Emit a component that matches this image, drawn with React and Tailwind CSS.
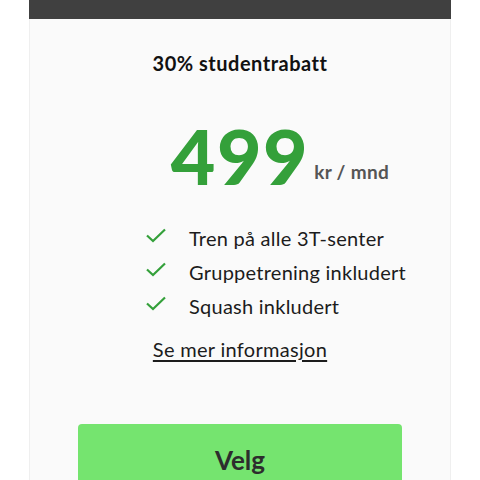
export default function App() {
  const items = ["Tren på alle 3T-senter", "Gruppetrening inkludert", "Squash inkludert"];
  return (
    <div className="w-[480px] h-[480px] overflow-hidden bg-white" style={{ fontFamily: "Lato, 'Noto Sans', sans-serif" }}>
      <div className="mx-[29px] w-[422px] h-[480px] flex flex-col border-x border-[#efefef] bg-[#fafafa]">
        <div className="h-[19px] shrink-0 bg-[#404040] -mx-px"></div>
        <div className="shrink-0 flex flex-col items-center">
          <div className="mt-[32px] text-[20px] font-bold text-[#111] leading-[24px] tracking-[0.5px]">30% studentrabatt</div>
          <div className="mt-[35px] relative flex items-baseline">
            <span className="text-[77px] font-black text-[#34a03a] leading-[90px] tracking-[1.5px]">499</span>
            <span className="absolute left-full bottom-[14px] ml-[5px] text-[19px] font-bold text-[#555] tracking-[0.3px] whitespace-nowrap">kr / mnd</span>
          </div>
          <div className="self-start ml-[115px] mt-[26px] flex flex-col gap-[10px]">
            {items.map((t) => (
              <div key={t} className="flex items-center h-[24px]">
                <svg width="22" height="16" viewBox="0 0 22 16" className="mr-[22px] -mt-[6px]">
                  <path d="M2 8.5 L8 14 L20 2.5" fill="none" stroke="#34a03a" strokeWidth="2.2" />
                </svg>
                <span className="text-[20px] text-[#1c1c1c] tracking-[0.25px] leading-[24px]">{t}</span>
              </div>
            ))}
          </div>
          <div className="mt-[19px] text-[20px] leading-[24px] text-[#1c1c1c] underline underline-offset-[3px] tracking-[0.3px]">Se mer informasjon</div>
          <button className="shrink-0 mt-[63px] w-[324px] h-[70px] rounded-[4px] bg-[#75e46f] flex justify-center pt-[21px]">
            <span className="text-[26px] font-bold text-[#2d2d2d] leading-[30px]">Velg</span>
          </button>
        </div>
      </div>
    </div>
  );
}
